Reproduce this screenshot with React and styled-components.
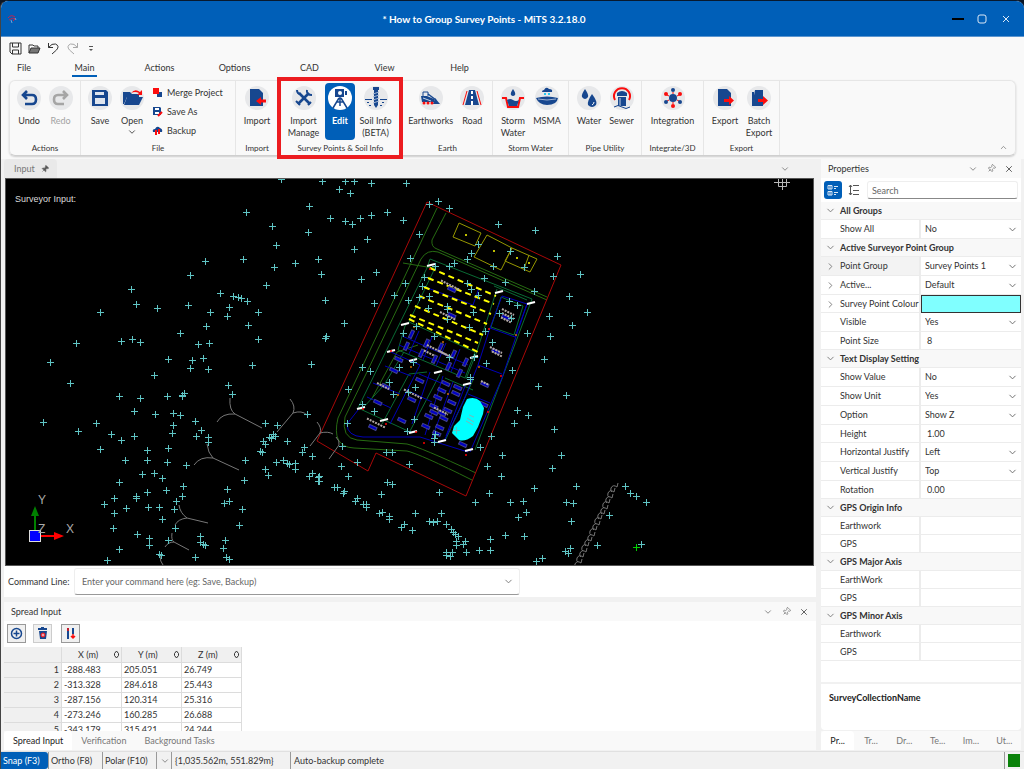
import React from "react";

import styled, { createGlobalStyle } from "styled-components";
import {
  ChevronDown,
  ChevronRight,
  ChevronUp,
  Pin,
  X,
} from "lucide-react";

const NAVY = "#17478f";
const RED = "#fb0d0d";
const BLUE = "#005fb8";

const GlobalStyle = createGlobalStyle`
  * {
    box-sizing: border-box;
  }
  body {
    margin: 0;
    background: #0b1626;
    color: #333;
    font-family: Lato, "Open Sans", sans-serif;
    font-size: 9px;
    line-height: 12px;
  }
  button, input, select {
    margin: 0;
    padding: 0;
    border: 0;
    background: none;
    color: inherit;
    font: inherit;
  }
  svg {
    flex: none;
  }
`;

const Window = styled.div`
  display: flex;
  flex-direction: column;
  min-height: 100vh;
  border-top: 1px solid #08192e;
  border-left: 1px solid #444;
  border-radius: 8px 8px 0 0;
  background: #f1f1f1;
  overflow: hidden;
`;

/* ---------- title bar ---------- */

const TitleBar = styled.header`
  display: grid;
  grid-template-columns: 1fr auto 1fr;
  align-items: center;
  height: 36px;
  padding: 0 12px 0 5px;
  border-bottom: 1px solid #5b95cf;
  background: ${BLUE};
  color: #fff;
`;

const Title = styled.h1`
  margin: 0;
  padding-right: 50px;
  font-size: 10px;
  font-weight: 700;
  line-height: 14px;
`;

const WindowButtons = styled.div`
  display: flex;
  justify-content: flex-end;
  gap: 12px;
`;

const WindowButton = styled.button`
  display: flex;
  width: 12px;
  height: 12px;
  align-items: center;
  justify-content: center;
`;

/* ---------- ribbon ---------- */

const RibbonArea = styled.div`
  padding-bottom: 3px;
  background: #f9f9f9;
`;

const QuickAccess = styled.div`
  display: flex;
  align-items: center;
  gap: 5px;
  height: 22px;
  padding: 1px 7px 0;
`;

const QuickButton = styled.button`
  display: flex;
  align-items: center;
  justify-content: center;
  width: ${(p) => (p.$narrow ? 14 : 14)}px;
  height: 16px;
  color: ${(p) => (p.disabled ? "#a8a8a8" : "#333")};
`;

const Menu = styled.nav`
  display: flex;
  height: 21px;
`;

const MenuTab = styled.button`
  width: ${(p) => (p.$narrow ? 46 : 75)}px;
  height: 18px;
`;

const MenuText = styled.span`
  display: inline-block;
  height: 17px;
  padding: 2px 3px 0;
  border-bottom: 2px solid ${(p) => (p.$active ? BLUE : "transparent")};
`;

const RibbonCard = styled.div`
  display: flex;
  height: 76px;
  margin: 0 8px;
  border: 1px solid #e6e6e6;
  border-bottom-color: #cfcfcf;
  border-radius: 6px;
  box-shadow: 0 1px 2px rgba(0, 0, 0, 0.18);
`;

const Group = styled.section`
  position: relative;
  display: flex;
  flex-direction: column;
  width: ${(p) => p.$w}px;
  border-right: 1px solid #e6e6e6;
`;

const GroupItems = styled.div`
  display: flex;
  flex: 1;
  padding: 2px 3px 0;
`;

const GroupName = styled.h2`
  margin: 0 -8px;
  padding-bottom: 1px;
  font-size: 8px;
  font-weight: 400;
  line-height: 12px;
  text-align: center;
`;

const Highlight = styled.div`
  position: absolute;
  inset: -4px -1px -4px -2px;
  border: 4px solid #ec1c20;
  pointer-events: none;
`;

const ToolButton = styled.button`
  display: flex;
  flex-direction: column;
  align-items: center;
  width: ${(p) => p.$w}px;
  height: 57px;
  padding-top: 3px;
  border-radius: 4px;
  background: ${(p) => (p.$active ? BLUE : "none")};
  color: ${(p) => (p.$active ? "#fff" : p.disabled ? "#a3a3a3" : "inherit")};
  font-weight: ${(p) => (p.$active ? 700 : 400)};
  white-space: nowrap;
`;

const ToolText = styled.span`
  display: block;
  margin-top: 5px;
  white-space: pre;
`;

const Disc = styled.span`
  display: flex;
  width: 24px;
  height: 24px;
  border-radius: 12px;
  background: ${(p) => (p.$active ? "#fff" : "#e7e8ea")};
`;

const SmallTools = styled.div`
  display: flex;
  flex-direction: column;
  padding-left: 4px;
`;

const SmallTool = styled.button`
  display: flex;
  align-items: center;
  gap: 4px;
  height: 19px;
`;

const CollapseButton = styled.button`
  align-self: flex-end;
  margin-left: auto;
  padding: 0 7px 3px;
  color: #777;
  line-height: 0;
`;

/* ---------- docking layout ---------- */

const Workspace = styled.main`
  display: flex;
  flex: 1;
  gap: 5px;
  padding: 0 3px 0 3px;
`;

const LeftColumn = styled.div`
  display: flex;
  flex: 1;
  flex-direction: column;
  min-width: 0;
`;

const DocTabs = styled.div`
  display: flex;
  align-items: center;
  height: 19px;
  padding-right: 26px;
`;

const DocTab = styled.button`
  display: flex;
  align-items: center;
  gap: 6px;
  height: 19px;
  margin-right: auto;
  padding: 0 8px 0 10px;
  border-radius: 4px 4px 0 0;
  background: #e9e9e9;
  color: #777;
`;

const Viewport = styled.div`
  position: relative;
  flex: 1;
  margin: 0 2px 0 1px;
  border: 1px solid #555;
  background: #000;
`;

const Drawing = styled.svg`
  display: block;
  width: 100%;
`;

const ViewportLabel = styled.span`
  position: absolute;
  top: 14px;
  left: 9px;
  color: #ddd;
  font-family: "Liberation Sans", Arial, sans-serif;
  font-size: 9px;
`;

const CommandRow = styled.div`
  display: flex;
  align-items: center;
  gap: 4px;
  height: 31px;
  padding-left: 4px;
  background: #fff;
`;

const CommandLabel = styled.label`
  width: 62px;
  white-space: nowrap;
`;

const CommandBox = styled.div`
  display: flex;
  align-items: center;
  width: 446px;
  height: 27px;
  padding: 0 5px 0 7px;
  border: 1px solid #eee;
  border-bottom-color: #999;
  border-radius: 3px;
  color: #777;
`;

const PlainInput = styled.input`
  flex: 1;
  min-width: 0;
  width: 100%;
  height: 16px;
  outline: 0;
  &::placeholder {
    color: #666;
    opacity: 1;
  }
`;

const PanelHeader = styled.div`
  display: flex;
  align-items: center;
  gap: 8px;
  height: 19px;
  padding: 0 7px;
  background: #f9f9f9;
  color: #777;
`;

const PanelTitle = styled.h2`
  flex: 1;
  margin: 0;
  color: #333;
  font-size: 9px;
  font-weight: 400;
`;

const IconButton = styled.button`
  display: flex;
  width: 10px;
  height: 10px;
  align-items: center;
  justify-content: center;
`;

const SpreadPanel = styled.section`
  margin-top: 5px;
  background: #fff;
`;

const SpreadTools = styled.div`
  display: flex;
  gap: 7px;
  height: 26px;
  padding: 3px 3px 0;
`;

const SpreadButton = styled.button`
  display: flex;
  width: 19px;
  height: 19px;
  margin-right: ${(p) => (p.$spaced ? 2 : 0)}px;
  border: 1px solid ${(p) => (p.$soft ? "#ccc" : "#999")};
  background: #f0f0f0;
`;

const TableArea = styled.div`
  height: 84px;
  overflow: hidden;
`;

const Table = styled.table`
  width: 238px;
  table-layout: fixed;
  border-collapse: separate;
  border-spacing: 0;
  th, td {
    height: 15px;
    padding: 0 2px;
    border-right: 1px solid #dcdcdc;
    border-bottom: 1px solid #dcdcdc;
    font-weight: 400;
    line-height: 14px;
  }
  thead th {
    height: 16px;
    background: #f0f0f0;
  }
  tbody th {
    background: #f0f0f0;
    text-align: right;
  }
`;

const HeadCell = styled.span`
  display: flex;
  align-items: center;
  justify-content: space-between;
  padding-left: 14px;
`;

const BottomTabs = styled.div`
  display: flex;
  height: 19px;
  background: #f9f9f9;
`;

const BottomTab = styled.button`
  flex: ${(p) => (p.$grow ? 1 : "none")};
  padding: ${(p) => (p.$grow ? 0 : "0 9px")};
  border-radius: 4px 4px 0 0;
  background: ${(p) => (p.$active ? "#fff" : "none")};
  color: ${(p) => (p.$active ? "#222" : "#777")};
`;

/* ---------- properties ---------- */

const Properties = styled.aside`
  display: flex;
  flex-direction: column;
  width: 200px;
`;

const SearchRow = styled.div`
  display: flex;
  align-items: center;
  gap: 3px;
  height: 24px;
  padding: 0 3px;
  background: #fff;
`;

const ModeButton = styled.button`
  display: flex;
  align-items: center;
  justify-content: center;
  width: 18px;
  height: 18px;
  border-radius: 3px;
  background: ${(p) => (p.$active ? BLUE : "none")};
`;

const SearchInput = styled.input`
  flex: 1;
  min-width: 0;
  height: 18px;
  margin-left: 1px;
  padding: 0 4px;
  border: 1px solid #eee;
  border-bottom-color: #888;
  border-radius: 3px;
  &::placeholder {
    color: #666;
    opacity: 1;
  }
`;

const GridArea = styled.div`
  flex: 1;
  background: #fff;
`;

const SectionRow = styled.h3`
  display: flex;
  align-items: center;
  gap: 4px;
  height: 18px;
  margin: 0;
  padding-left: 4px;
  border-bottom: 1px solid #ececec;
  background: #f8f8f8;
  color: #333;
  font-size: 9px;
  font-weight: 700;
`;

const PropRow = styled.div`
  display: grid;
  grid-template-columns: 98px 1fr;
  gap: 2px;
  height: ${(p) => (p.$tall ? 19 : 18)}px;
  border-bottom: 1px solid #ececec;
  background: linear-gradient(#ececec, #ececec) 98px 0 / 2px 100% no-repeat;
`;

const PropName = styled.label`
  display: flex;
  align-items: center;
  gap: 4px;
  padding-left: ${(p) => (p.$expand ? 4 : 19)}px;
  background: ${(p) => (p.$selected ? "#f3f3f3" : "none")};
  white-space: nowrap;
`;

const PropValue = styled.div`
  position: relative;
  display: flex;
  min-width: 0;
  align-items: center;
  padding-left: ${(p) => (p.$text ? 6 : 4)}px;
  svg {
    position: absolute;
    right: 3px;
    pointer-events: none;
  }
`;

const PropSelect = styled.select`
  width: 100%;
  height: 100%;
  appearance: none;
  outline: 0;
`;

const ColourInput = styled.input`
  width: 100%;
  height: 18px;
  border: 1px solid #333;
  appearance: none;
  &::-webkit-color-swatch-wrapper {
    padding: 0;
  }
  &::-webkit-color-swatch {
    border: 0;
  }
`;

const Description = styled.div`
  height: 46px;
  margin: 2px 0 1px;
  padding: 8px;
  border-radius: 0 0 4px 4px;
  background: #fff;
  color: #222;
  font-weight: 700;
`;

/* ---------- status bar ---------- */

const StatusBar = styled.footer`
  display: flex;
  align-items: stretch;
  height: 18px;
  margin-top: 1px;
  border-top: 1px solid #e0e0e0;
`;

const StatusCell = styled.span`
  display: flex;
  align-items: center;
  padding: 0 3px;
  width: ${(p) => (p.$w ? p.$w + "px" : "auto")};
  flex: ${(p) => (p.$w ? "none" : 1)};
  border-left: 1px solid #999;
  white-space: nowrap;
`;

const StatusToggle = styled.button`
  width: ${(p) => p.$w}px;
  border-left: ${(p) => (p.$active ? "0" : "1px solid #999")};
  border-radius: ${(p) => (p.$active ? "0 3px 3px 0" : "0")};
  background: ${(p) => (p.$active ? BLUE : "none")};
  color: ${(p) => (p.$active ? "#fff" : "inherit")};
  text-align: left;
  padding-left: 2px;
  white-space: nowrap;
`;

const StatusLight = styled.span`
  flex: none;
  width: 12px;
  height: 13px;
  background: #0a820a;
`;

/* ---------- icons ---------- */

const toolIcons = {
  undo: (
    <path
      d="M6 9H15Q19 9 19 13.500T15 18H8M10 5L6 9L10 13"
      fill="none"
      stroke={NAVY}
      strokeWidth="2.600"
    />
  ),
  redo: (
    <path
      d="M18 9H9Q5 9 5 13.500T9 18H15M14 5L18 9L14 13"
      fill="none"
      stroke="#a5a5a5"
      strokeWidth="2.600"
    />
  ),
  save: (
    <g>
      <path d="M4 4H18L20 6V20H4Z" fill={NAVY} />
      <path d="M7 6H16V9H7ZM7 12H17V18H7Z" fill="#dfe5ee" />
    </g>
  ),
  open: (
    <g>
      <path d="M3 6H10L12 8H19V11H7L4 18H3Z" fill={NAVY} />
      <path d="M7 11H23L19 19H4Z" fill={NAVY} />
      <path d="M11 7Q15 2 20 6L22 4V9H17L19 7Q15 5 11 7Z" fill={RED} />
    </g>
  ),
  import: (
    <g>
      <path d="M5 3H14L18 7V20H5Z" fill={NAVY} />
      <path d="M21 13.500H16V11L11 15L16 19V16.500H21Z" fill={RED} />
    </g>
  ),
  tools: (
    <g stroke={NAVY} fill="none">
      <path d="M7 7L18 18" strokeWidth="2.600" />
      <path d="M17 7L6 18" strokeWidth="2.600" />
      <path d="M15 4Q14 9 20 9M5 4Q5 8 9 8" strokeWidth="2" />
      <path d="M4 15L8 19M16 19L19 16" strokeWidth="2" />
    </g>
  ),
  survey: (
    <g>
      <path d="M7 3H16V11H7ZM17 5H19V9H17Z" fill={NAVY} />
      <circle cx="12" cy="7" r="2" fill="#fff" />
      <path
        d="M12 11V20M11 12L5 22M13 12L19 22M8 16H16"
        fill="none"
        stroke={NAVY}
        strokeWidth="1.500"
      />
    </g>
  ),
  soil: (
    <g>
      <path d="M9 1H15V4H14V19L12 22L10 19V4H9Z" fill={NAVY} />
      <path
        d="M9 8L15 6M9 11L15 9M9 14L15 12M9 17L15 15"
        stroke="#9db1d0"
        fill="none"
      />
      <path
        d="M1 13.500H8M16 13.500H23M3 16.500H5M18 16.500H20M5 19.500H7M16 19.500H18"
        stroke={NAVY}
        strokeWidth="1"
      />
    </g>
  ),
  earth: (
    <g>
      <path d="M2 10H8L15 13V16H3Z" fill={NAVY} />
      <path d="M4 10V6H9V10" fill="none" stroke={NAVY} />
      <path d="M16 12L21 18H14Z" fill={NAVY} />
      <path d="M9 8L17 14" stroke={NAVY} strokeWidth="1.500" />
      <path d="M4 12L12 15" stroke="#c9d4e5" />
      <g fill={RED}>
        <circle cx="5" cy="17" r="1.500" />
        <circle cx="9" cy="17" r="1.500" />
        <circle cx="13" cy="17" r="1.500" />
      </g>
    </g>
  ),
  road: (
    <g>
      <path d="M9 4H15L19 19H5Z" fill={NAVY} />
      <path d="M12 5V8M12 10V13M12 15V19" stroke="#fff" strokeWidth="2" />
      <path d="M7 5L3 19M17 5L21 19" stroke={RED} />
    </g>
  ),
  storm: (
    <g>
      <path d="M12 3Q15 7 14 9Q12 11 10 9Q9 7 12 3Z" fill={NAVY} />
      <path
        d="M1 12H5L7 21H17L19 12H23"
        fill="none"
        stroke={RED}
        strokeWidth="2"
      />
      <path d="M6 14Q9 12 12 14Q15 16 18 14L16 20H8Z" fill={NAVY} />
    </g>
  ),
  msma: (
    <g>
      <path d="M7 6Q7 4 9 4Q11 0 14 3Q18 3 17 6Z" fill={NAVY} />
      <path d="M10 7V9M14 7V9" stroke="#28c8f0" strokeWidth="2" />
      <path d="M1 12Q12 9 23 12Q22 19 12 19Q4 19 1 12Z" fill={NAVY} />
      <path d="M3 13Q12 15 21 13" fill="none" stroke="#9db1d0" />
    </g>
  ),
  water: (
    <g fill={NAVY}>
      <path d="M8 3Q12 9 11 11Q8 15 5 11Q4 9 8 3Z" />
      <path d="M15 8Q21 16 19 19Q15 23 11 19Q10 15 15 8Z" />
      <path d="M17 16Q17 18 15 19" fill="none" stroke="#fff" />
    </g>
  ),
  sewer: (
    <g>
      <path
        d="M5 14A8 8 0 1 1 19 14"
        fill="none"
        stroke={RED}
        strokeWidth="2"
      />
      <path d="M7 7Q12 3 17 7V10H7ZM8 11H16V20H8Z" fill={NAVY} />
      <path d="M10 12V20" stroke="#c9d4e5" />
      <path d="M4 21Q8 18 12 21T20 21" fill="none" stroke={NAVY} />
    </g>
  ),
  integration: (
    <g>
      <circle cx="12" cy="12" r="4" fill={NAVY} />
      <path d="M12 6V8M12 16V18M6 9L8 10M16 14L18 15M6 15L8 14M16 10L18 9" stroke={RED} />
      <g fill={RED}>
        <circle cx="12" cy="20" r="2" />
        <circle cx="5" cy="8" r="2" />
        <circle cx="19" cy="8" r="2" />
      </g>
      <g fill={NAVY}>
        <circle cx="12" cy="4" r="2" />
        <circle cx="5" cy="16" r="2" />
        <circle cx="19" cy="16" r="2" />
      </g>
    </g>
  ),
  export: (
    <g>
      <path d="M5 3H14L18 7V20H5Z" fill={NAVY} />
      <path d="M11 13H16V10L21 14.500L16 19V16H11Z" fill={RED} />
    </g>
  ),
  batch: (
    <g>
      <path d="M5 6H7V20H5ZM8 4H16V20H5Z" fill={NAVY} />
      <path d="M11 13H16V10L21 14.500L16 19V16H11Z" fill={RED} />
    </g>
  ),
};

const smallIcons = {
  merge: (
    <g>
      <path d="M5 5H10V10H5Z" fill={NAVY} />
      <path d="M1 1H7V7H1Z" fill={RED} />
    </g>
  ),
  saveAs: (
    <g>
      <path d="M1 1H8L9 2V9H1Z" fill={NAVY} />
      <path d="M3 2H7V4H3ZM3 6H7V8H3Z" fill="#fff" />
      <path d="M6 10L10 6" stroke={RED} strokeWidth="2" />
    </g>
  ),
  backup: (
    <g>
      <path d="M1 7Q0 4 3 4Q5 0 8 3Q11 4 10 7Z" fill={NAVY} />
      <path d="M4 5V10M7 4V9" stroke={RED} strokeWidth="2" />
    </g>
  ),
};

const Tool = ({ icon, text, w, active, disabled, drop }) => (
  <ToolButton $w={w} $active={active} disabled={disabled}>
    <Disc $active={active}>
      <svg width="24" height="24" viewBox="0 0 24 24">
        {toolIcons[icon]}
      </svg>
    </Disc>
    <ToolText>{text}</ToolText>
    {drop && <ChevronDown size={10} strokeWidth={2} />}
  </ToolButton>
);

const Small = ({ icon, text }) => (
  <SmallTool>
    <svg width="11" height="11" viewBox="0 0 11 11">
      {smallIcons[icon]}
    </svg>
    {text}
  </SmallTool>
);

/* ---------- drawing data ---------- */

// x, y of every survey point
const points = `281,179 246,212 272,226 276,245 243,259 295,263 274,267 205,261 190,275 266,285 131,289 136,304
157,308 188,305 220,293 233,296 238,297 241,298 247,301 229,307 210,312 227,316 258,312 100,312 206,326 248,325
180,333 258,339 198,344 209,343 132,339 121,341 140,342 76,343 50,362 168,359 192,360 203,358 190,368 208,369
252,365 154,375 70,383 228,385 119,396 140,398 167,396 182,395 184,393 182,396 232,394 134,411 155,414 173,413
180,415 43,422 96,423 173,425 195,421 201,430 78,431 111,434 134,436 121,440 172,433 196,436 208,437 208,442
100,449 147,450 168,448 125,460 147,460 167,462 186,465 154,473 142,474 162,478 119,482 183,486 166,490 147,492
136,496 136,498 114,498 182,496 176,501 104,504 126,508 148,507 159,507 174,509 114,513 162,519 113,528 175,528
137,534 149,538 149,545 168,540 119,549 159,554 161,555 107,560 195,557 200,536 200,542 203,544 205,545 225,540
223,548 226,557 229,559 239,525 242,509 224,503 229,501 227,489 244,480 245,460 265,469 268,475 276,462 283,460
287,463 289,464 295,463 295,469 260,451 262,452 263,441 265,444 269,437 271,438 273,434 275,436 287,441 265,423
277,425 307,414 304,447 302,452 312,456 312,473 309,476 318,477 318,481 322,181 345,181 354,181 371,183 406,183
339,189 350,193 309,206 438,201 429,204 449,208 387,212 371,215 360,218 345,221 352,224 330,218 403,220 498,224
535,230 308,232 419,234 367,239 354,249 478,244 471,253 510,251 557,256 467,259 454,263 410,258 318,259 321,274
376,272 361,279 449,266 493,266 524,267 435,266 484,278 505,282 553,276 580,274 424,277 405,283 422,286 467,283
471,289 478,295 534,291 569,296 325,300 394,295 408,300 429,296 419,297 374,303 428,308 447,306 447,309 473,312
499,313 509,301 517,305 511,318 549,316 587,312 572,325 344,323 447,319 469,327 416,326 485,331 527,333 550,336
492,342 326,336 325,338 403,333 434,336 449,357 311,364 362,367 370,371 399,367 413,362 544,359 486,363 512,370
474,357 470,379 538,386 566,395 517,410 528,415 514,423 554,429 491,436 480,447 502,455 561,455 552,468 487,466
501,476 534,488 576,486 489,493 475,502 510,502 523,501 566,502 573,503 526,512 518,517 571,521 505,535 524,536
490,539 490,550 479,550 466,552 465,541 463,544 458,536 455,534 456,541 456,545 451,529 453,532 446,524 437,521
433,522 429,521 441,513 415,513 439,492 412,530 404,524 401,527 389,516 389,519 382,512 379,513 381,494 392,484
387,482 409,464 386,452 392,452 357,462 342,446 341,466 348,476 357,498 355,501 363,504 366,504 366,507 344,491
343,493 334,487 337,487 319,476 319,481 348,389 347,423 362,404 374,411 393,394 415,387 389,382 470,377 414,419
407,431 435,434 434,438 434,442 408,392 565,551 570,548 568,553 542,558 536,561 452,552 446,552 446,555 450,556
625,486 630,493 636,496 646,502 609,515 597,545 641,544 456,430`
  .split(/\s+/)
  .map((pair) => pair.split(",").map(Number));

const cross = ([x, y]) => `M${x - 3} ${y + 0.5}H${x + 4}M${x + 0.5} ${y - 3}V${y + 4}`;

// rows of parking bays: x1, y1, x2, y2
const bays = [
  [430, 268, 496, 296],
  [428, 278, 494, 304],
  [424, 287, 491, 314],
  [419, 296, 487, 324],
  [415, 306, 483, 335],
  [410, 315, 478, 343],
  [409, 319, 478, 352],
];

const steepLots = [
  [411, 334], [406, 346], [426, 343], [421, 353], [440, 347],
  [434, 359], [453, 354], [448, 366], [465, 362], [459, 373],
];

const flatLots = [
  [399, 359], [394, 370], [386, 386], [378, 402], [373, 427], [420, 380],
  [412, 399], [402, 420], [446, 383], [442, 390], [438, 397], [434, 406],
  [429, 416], [426, 426], [458, 387], [456, 393], [452, 402], [448, 410],
  [444, 418], [440, 427], [437, 433], [485, 384], [484, 404], [463, 444],
  [452, 289], [452, 315], [506, 317], [496, 351], [442, 413], [434, 412],
];

const hatches = [
  [450, 285, 9], [448, 316, 8], [508, 316, 6], [496, 350, 6], [437, 350, 10],
  [445, 354, 6], [429, 353, 5], [383, 386, 6], [413, 394, 9], [376, 423, 9],
  [441, 411, 7], [485, 383, 4], [508, 312, 6], [506, 320, 5], [497, 354, 5],
];

const stubs = [
  [431, 265], [499, 292], [531, 303], [405, 324], [391, 351], [413, 360],
  [438, 372], [474, 357], [467, 384], [361, 408], [384, 420], [413, 432],
  [442, 441], [469, 450],
];

const redDots = [
  [430, 269], [489, 329], [391, 351], [386, 424], [416, 432],
  [424, 443], [466, 455], [488, 412], [501, 376], [363, 409],
];

const orangeDots = [[414, 327], [443, 342], [516, 335], [479, 367], [411, 367], [398, 395], [448, 394]];

const slopeMarks = Array.from({ length: 15 }, (_, i) => [
  Math.round(618 - i * 2.6),
  Math.round(486 + i * 5.4),
]);

const SitePlan = () => (
  <Drawing viewBox="6 179 807 386" aria-label="Survey drawing">
    <g fill="none" strokeWidth="1">
      <path
        stroke="#276b12"
        d="M437 208L355 382L338 418Q331 447 354 448L407 451Q420 454 472 480M446 213L432 240Q431 247 437 249L547 297M547 300L438 252Q427 249 421 259L366 374L345 417Q341 438 357 440L407 444Q420 447 476 473M403 263L427 267L435 268M418 345L397 352L371 400"
      />
      <path
        stroke="#0a6b34"
        d="M430 259L532 299L475 450M430 259L427 268L358 408L408 431M435 268L409 322L475 352L465 378L398 350L405 326L409 322M494 286L527 300M501 297L523 306L514 335L491 327ZM497 289L476 354L466 379M404 352L384 385L363 408M427 372L409 374L382 424M440 374L410 431M445 378L473 390M473 380L445 441"
      />
      <path
        stroke="#0000b8"
        d="M425 287L473 305L479 288M502 296L527 304L515 337L490 328ZM527 304L502 378L470 452M490 328L478 365L502 374M478 365L463 402L444 441M402 336L468 365M419 331L409 354M432 337L423 360M446 343L436 366M460 349L451 372M399 345L465 373M391 352L420 365L390 424M385 366L411 376M373 383L400 394M367 397L391 408M430 372L412 424M419 374L441 383M411 392L432 402M443 376L425 435M453 382L432 438M465 386L446 436M468 394L490 403M358 410L347 424Q347 436 363 437L420 437L468 452"
      />
      <path stroke="#a80808" d="M427 202L561 265L466 496L376 453L368 471L317 441Z" />
      <path
        stroke="#969600"
        d="M459 223L481 233L475 246L453 237ZM487 235L512 248L501 270L474 257ZM512 248L537 259L530 272L505 261ZM529 255L524 269"
      />
      <path
        stroke="#777"
        d="M230 398Q229 410 235 414L262 428M217 422Q222 413 235 414M207 444Q208 453 213 458L239 470M194 465Q200 456 213 458M179 505Q180 513 187 518L208 523M175 525Q178 519 187 518M172 533Q171 540 174 542L189 550M165 547Q168 542 174 542M160 555Q160 562 163 565M290 399Q296 406 293 413L277 432M293 413Q302 410 307 415M317 422Q322 428 320 433L310 446M320 433Q328 431 333 434M336 437Q340 441 339 445L329 459"
      />
      <path
        stroke="#777"
        d={slopeMarks
          .map(([x, y]) => `M${x} ${y - 3}l-1 4q-4 -3 -6 1q-1 3 1 4`)
          .join("")}
      />
    </g>
    <g stroke="#ff0" strokeWidth="2" strokeDasharray="6 4">
      {bays.map(([x1, y1, x2, y2]) => (
        <line key={y1} x1={x1} y1={y1} x2={x2} y2={y2} />
      ))}
    </g>
    <g fill="#ff0">
      <circle cx="466" cy="235" r="1" />
      <circle cx="494" cy="251" r="1" />
      <circle cx="517" cy="258" r="1" />
      <circle cx="529" cy="263" r="1" />
    </g>
    <g fill="#0000c8" stroke="#44448c" strokeWidth="1">
      {steepLots.map(([x, y]) => (
        <rect key={`${x}-${y}`} x={x - 1} y={y - 4} width="3" height="8" transform={`rotate(25 ${x} ${y})`} />
      ))}
      {flatLots.map(([x, y]) => (
        <rect key={`${x}-${y}`} x={x - 4} y={y - 1} width="8" height="3" transform={`rotate(25 ${x} ${y})`} />
      ))}
    </g>
    <g stroke="#b4aaa6" strokeWidth="2" strokeDasharray="2 1">
      {hatches.map(([x, y, r]) => (
        <line key={`${x}-${y}`} x1={x - r} y1={y - r / 2} x2={x + r} y2={y + r / 2} />
      ))}
    </g>
    <path
      d="M467 399Q475 396 480 401L484 408L483 414L478 427L473 436Q465 442 459 440L452 433L454 426L460 420L463 407Z"
      fill="#0ff"
    />
    <path d="M467 418l7 4M466 421l7 4M469 415l5 2" stroke="#7ab8b8" />
    <g stroke="#fff" strokeWidth="2">
      {stubs.map(([x, y]) => (
        <line key={`${x}-${y}`} x1={x - 4} y1={y + 1} x2={x + 4} y2={y - 1} />
      ))}
    </g>
    <g fill="#f00">
      {redDots.map(([x, y]) => (
        <circle key={`${x}-${y}`} cx={x} cy={y} r="1" />
      ))}
    </g>
    <g fill="#d06a00">
      {orangeDots.map(([x, y]) => (
        <circle key={`${x}-${y}`} cx={x} cy={y} r="1" />
      ))}
    </g>
    <path d={points.map(cross).join("")} stroke="#5fc4c4" strokeWidth="1" />
    <path d={cross([636, 547])} stroke="#00d000" />
    <path
      d="M774 182.500H790M782.500 179V190M778.500 179V186.500H786.500V179"
      fill="none"
      stroke="#b8b8b8"
    />
    {/* axis marker */}
    <path d="M35 531V514" stroke="#008000" strokeWidth="2" />
    <path d="M31 516L35 506L39 516Z" fill="#008000" />
    <path d="M40 536H55" stroke="#f00" strokeWidth="2" />
    <path d="M54 532L64 536L54 540Z" fill="#f00" />
    <rect x="29.500" y="530.500" width="11" height="11" fill="#00f" stroke="#ddd" />
    <g fill="#aaa" fontFamily="Liberation Sans, Arial, sans-serif" fontSize="12">
      <text x="38" y="504">Y</text>
      <text x="38" y="533">Z</text>
      <text x="66" y="533">X</text>
    </g>
  </Drawing>
);

/* ---------- property data ---------- */

const sections = [
  { title: "All Groups", rows: [{ name: "Show All", value: "No", type: "select" }] },
  {
    title: "Active Surveyor Point Group",
    rows: [
      { name: "Point Group", value: "Survey Points 1", type: "select", expand: true, selected: true },
      { name: "Active...", value: "Default", type: "select", expand: true },
      { name: "Survey Point Colour", value: "#80ffff", type: "colour", expand: true },
      { name: "Visible", value: "Yes", type: "select" },
      { name: "Point Size", value: "8", type: "text" },
    ],
  },
  {
    title: "Text Display Setting",
    rows: [
      { name: "Show Value", value: "No", type: "select" },
      { name: "Show Unit", value: "Yes", type: "select" },
      { name: "Option", value: "Show Z", type: "select" },
      { name: "Height", value: "1.00", type: "text" },
      { name: "Horizontal Justify", value: "Left", type: "select" },
      { name: "Vertical Justify", value: "Top", type: "select" },
      { name: "Rotation", value: "0.00", type: "text" },
    ],
  },
  {
    title: "GPS Origin Info",
    rows: [
      { name: "Earthwork", value: "", type: "text" },
      { name: "GPS", value: "", type: "text" },
    ],
  },
  {
    title: "GPS Major Axis",
    rows: [
      { name: "EarthWork", value: "", type: "text" },
      { name: "GPS", value: "", type: "text" },
    ],
  },
  {
    title: "GPS Minor Axis",
    rows: [
      { name: "Earthwork", value: "", type: "text" },
      { name: "GPS", value: "", type: "text" },
    ],
  },
];

const spreadRows = [
  ["-288.483", "205.051", "26.749"],
  ["-313.328", "284.618", "25.443"],
  ["-287.156", "120.314", "25.316"],
  ["-273.246", "160.285", "26.688"],
  ["-343.179", "315.421", "24.244"],
];

const Property = ({ id, row }) => (
  <PropRow $tall={row.type === "select"}>
    <PropName htmlFor={id} $expand={row.expand} $selected={row.selected}>
      {row.expand && <ChevronRight size={11} color="#777" />}
      {row.name}
    </PropName>
    {row.type === "select" && (
      <PropValue>
        <PropSelect id={id}>
          <option>{row.value}</option>
        </PropSelect>
        <ChevronDown size={11} color="#666" />
      </PropValue>
    )}
    {row.type === "text" && (
      <PropValue $text>
        <PlainInput id={id} defaultValue={row.value} />
      </PropValue>
    )}
    {row.type === "colour" && <ColourInput id={id} type="color" defaultValue={row.value} />}
  </PropRow>
);

const PanelButtons = () => (
  <>
    <IconButton aria-label="Panel menu">
      <ChevronDown size={10} />
    </IconButton>
    <IconButton aria-label="Pin">
      <Pin size={9} style={{ rotate: "45deg" }} />
    </IconButton>
    <IconButton aria-label="Close">
      <X size={10} color="#444" />
    </IconButton>
  </>
);

const App = () => {
  return (
    <>
      <GlobalStyle />
      <Window>
        <TitleBar>
          <svg width="12" height="12" viewBox="0 0 12 12" fill="none">
            <path d="M2 5Q5 1 9 4M3 7Q7 4 9 6L7 8" stroke="#c4224c" />
            <path d="M9 5L10 7M5 7L6 10" stroke="#6fa0d8" />
          </svg>
          <Title>* How to Group Survey Points - MiTS 3.2.18.0</Title>
          <WindowButtons>
            <WindowButton aria-label="Minimize">
              <svg width="12" height="12">
                <path d="M0 6H12" stroke="#000" strokeWidth="2" />
              </svg>
            </WindowButton>
            <WindowButton aria-label="Maximize">
              <svg width="12" height="12">
                <rect x="2" y="2" width="8" height="8" rx="2" fill="none" stroke="#dce9f6" />
              </svg>
            </WindowButton>
            <WindowButton aria-label="Close">
              <svg width="12" height="12">
                <path d="M3 3L9 9M9 3L3 9" stroke="#dce9f6" />
              </svg>
            </WindowButton>
          </WindowButtons>
        </TitleBar>

        <RibbonArea>
          <QuickAccess>
            <QuickButton aria-label="Save">
              <svg width="13" height="13" fill="none" stroke="currentColor">
                <path d="M1 1H12V12H3L1 10ZM3.500 1V5H9.500V1M3.500 12V8H9.500V12" />
              </svg>
            </QuickButton>
            <QuickButton aria-label="Open">
              <svg width="13" height="12" fill="none" stroke="currentColor">
                <path d="M1 10V2H5L6 3H10V5" />
                <path d="M1 10L3 5H12L10 10Z" fill="#777" />
              </svg>
            </QuickButton>
            <QuickButton aria-label="Undo">
              <svg width="13" height="13" fill="none" stroke="currentColor">
                <path d="M1.500 1V5.500H6M1.500 5.500Q5 1 8.500 2Q13 4 9.500 8L5 12" />
              </svg>
            </QuickButton>
            <QuickButton aria-label="Redo" disabled>
              <svg width="13" height="13" fill="none" stroke="currentColor">
                <path d="M11.500 1V5.500H7M11.500 5.500Q8 1 4.500 2Q0 4 3.500 8L8 12" />
              </svg>
            </QuickButton>
            <QuickButton aria-label="Customize">
              <svg width="6" height="6" fill="#555">
                <path d="M1 0H5V1H1ZM1 3H5L3 5Z" />
              </svg>
            </QuickButton>
          </QuickAccess>
          <Menu>
            <MenuTab $narrow>
              <MenuText>File</MenuText>
            </MenuTab>
            {["Main", "Actions", "Options", "CAD", "View", "Help"].map((name) => (
              <MenuTab key={name}>
                <MenuText $active={name === "Main"}>{name}</MenuText>
              </MenuTab>
            ))}
          </Menu>
          <RibbonCard>
            <Group $w={71}>
              <GroupItems>
                <Tool icon="undo" text="Undo" w={32} />
                <Tool icon="redo" text="Redo" w={31} disabled />
              </GroupItems>
              <GroupName>Actions</GroupName>
            </Group>
            <Group $w={155}>
              <GroupItems>
                <Tool icon="save" text="Save" w={32} />
                <Tool icon="open" text="Open" w={32} drop />
                <SmallTools>
                  <Small icon="merge" text="Merge Project" />
                  <Small icon="saveAs" text="Save As" />
                  <Small icon="backup" text="Backup" />
                </SmallTools>
              </GroupItems>
              <GroupName>File</GroupName>
            </Group>
            <Group $w={43}>
              <GroupItems>
                <Tool icon="import" text="Import" w={36} />
              </GroupItems>
              <GroupName>Import</GroupName>
            </Group>
            <Group $w={124}>
              <GroupItems>
                <Tool icon="tools" text={"Import\nManage"} w={43} />
                <Tool icon="survey" text="Edit" w={30} active />
                <Tool icon="soil" text={"Soil Info\n(BETA)"} w={41} />
              </GroupItems>
              <GroupName>Survey Points &amp; Soil Info</GroupName>
              <Highlight />
            </Group>
            <Group $w={90}>
              <GroupItems>
                <Tool icon="earth" text="Earthworks" w={50} />
                <Tool icon="road" text="Road" w={34} />
              </GroupItems>
              <GroupName>Earth</GroupName>
            </Group>
            <Group $w={76}>
              <GroupItems>
                <Tool icon="storm" text={"Storm\nWater"} w={34} />
                <Tool icon="msma" text="MSMA" w={34} />
              </GroupItems>
              <GroupName>Storm Water</GroupName>
            </Group>
            <Group $w={73}>
              <GroupItems>
                <Tool icon="water" text="Water" w={34} />
                <Tool icon="sewer" text="Sewer" w={31} />
              </GroupItems>
              <GroupName>Pipe Utility</GroupName>
            </Group>
            <Group $w={62}>
              <GroupItems>
                <Tool icon="integration" text="Integration" w={55} />
              </GroupItems>
              <GroupName>Integrate/3D</GroupName>
            </Group>
            <Group $w={76}>
              <GroupItems>
                <Tool icon="export" text="Export" w={36} />
                <Tool icon="batch" text={"Batch\nExport"} w={32} />
              </GroupItems>
              <GroupName>Export</GroupName>
            </Group>
            <CollapseButton aria-label="Collapse ribbon">
              <ChevronUp size={9} />
            </CollapseButton>
          </RibbonCard>
        </RibbonArea>

        <Workspace>
          <LeftColumn>
            <DocTabs>
              <DocTab>
                Input
                <Pin size={8} fill="#555" style={{ rotate: "45deg" }} />
              </DocTab>
              <IconButton aria-label="Open documents">
                <ChevronDown size={10} color="#777" />
              </IconButton>
            </DocTabs>
            <Viewport>
              <SitePlan />
              <ViewportLabel>Surveyor Input:</ViewportLabel>
            </Viewport>
            <CommandRow>
              <CommandLabel htmlFor="command">Command Line:</CommandLabel>
              <CommandBox>
                <PlainInput id="command" placeholder="Enter your command here (eg: Save, Backup)" />
                <ChevronDown size={11} />
              </CommandBox>
            </CommandRow>

            <SpreadPanel>
              <PanelHeader>
                <PanelTitle>Spread Input</PanelTitle>
                <PanelButtons />
              </PanelHeader>
              <SpreadTools>
                <SpreadButton aria-label="Add row">
                  <svg width="17" height="17">
                    <circle cx="8.500" cy="8.500" r="5" fill="none" stroke={NAVY} strokeWidth="1.500" />
                    <path d="M8.500 5.500V11.500M5.500 8.500H11.500" stroke={NAVY} strokeWidth="1.500" />
                  </svg>
                </SpreadButton>
                <SpreadButton aria-label="Delete row" $soft $spaced>
                  <svg width="17" height="17">
                    <path d="M4 5H13V3H10V2H7V3H4ZM5 6H13L12 14H6Z" fill={NAVY} />
                    <circle cx="9" cy="10" r="2" fill="#e9a0b0" stroke={RED} strokeWidth="1" />
                  </svg>
                </SpreadButton>
                <SpreadButton aria-label="Sort">
                  <svg width="17" height="17">
                    <path d="M6 3V14M11 3V9" stroke={NAVY} strokeWidth="2" />
                    <path d="M11 9V13M9 11L11 13L13 11M6 3V6" stroke={RED} strokeWidth="1.500" fill="none" />
                  </svg>
                </SpreadButton>
              </SpreadTools>
              <TableArea>
                <Table>
                  <colgroup>
                    <col width="58" />
                    <col width="60" />
                    <col width="60" />
                    <col width="60" />
                  </colgroup>
                  <thead>
                    <tr>
                      <th aria-label="Row" />
                      {["X (m)", "Y (m)", "Z (m)"].map((name) => (
                        <th key={name}>
                          <HeadCell>
                            {name}
                            <svg width="5" height="9" fill="none" stroke="#333">
                              <path d="M2.500 1L4.500 3.500V5.500L2.500 8L0.500 5.500V3.500Z" />
                            </svg>
                          </HeadCell>
                        </th>
                      ))}
                    </tr>
                  </thead>
                  <tbody>
                    {spreadRows.map((row, i) => (
                      <tr key={row[0]}>
                        <th>{i + 1}</th>
                        {row.map((value) => (
                          <td key={value}>{value}</td>
                        ))}
                      </tr>
                    ))}
                  </tbody>
                </Table>
              </TableArea>
              <BottomTabs>
                <BottomTab $active>Spread Input</BottomTab>
                <BottomTab>Verification</BottomTab>
                <BottomTab>Background Tasks</BottomTab>
              </BottomTabs>
            </SpreadPanel>
          </LeftColumn>

          <Properties>
            <PanelHeader>
              <PanelTitle>Properties</PanelTitle>
              <PanelButtons />
            </PanelHeader>
            <SearchRow>
              <ModeButton $active aria-label="Categorized">
                <svg width="12" height="12" fill="none" stroke="#dce9f6">
                  <path d="M1 1.500H5V5H1ZM1 7.500H5V11H1ZM7 2.500H11M7 4.500H9M7 8.500H11M7 10.500H9M3 2V5M3 8V11" />
                </svg>
              </ModeButton>
              <ModeButton aria-label="Alphabetical">
                <svg width="12" height="12" fill="none" stroke="#555">
                  <path d="M2.500 1V11M1 3L2.500 1L4 3M1 9L2.500 11L4 9M5 1.500H11M5 6.500H11M5 10.500H11" />
                </svg>
              </ModeButton>
              <SearchInput placeholder="Search" aria-label="Search" />
            </SearchRow>
            <GridArea>
              {sections.map((section, s) => (
                <React.Fragment key={section.title}>
                  <SectionRow>
                    <ChevronDown size={11} color="#777" />
                    {section.title}
                  </SectionRow>
                  {section.rows.map((row, r) => (
                    <Property key={row.name} id={`prop-${s}-${r}`} row={row} />
                  ))}
                </React.Fragment>
              ))}
            </GridArea>
            <Description>SurveyCollectionName</Description>
            <BottomTabs>
              {["Pr...", "Tr...", "Dr...", "Te...", "Im...", "Ut..."].map((name) => (
                <BottomTab key={name} $grow $active={name === "Pr..."}>
                  {name}
                </BottomTab>
              ))}
            </BottomTabs>
          </Properties>
        </Workspace>

        <StatusBar>
          <StatusToggle $w={47} $active>
            Snap (F3)
          </StatusToggle>
          <StatusToggle $w={54}>Ortho (F8)</StatusToggle>
          <StatusToggle $w={54}>Polar (F10)</StatusToggle>
          <StatusCell $w={15}>
            <ChevronDown size={10} color="#777" />
          </StatusCell>
          <StatusCell $w={119}>&#123;1,035.562m, 551.829m&#125;</StatusCell>
          <StatusCell>Auto-backup complete</StatusCell>
          <StatusCell $w={20}>
            <StatusLight />
          </StatusCell>
        </StatusBar>
      </Window>
    </>
  );
};

export default App;
